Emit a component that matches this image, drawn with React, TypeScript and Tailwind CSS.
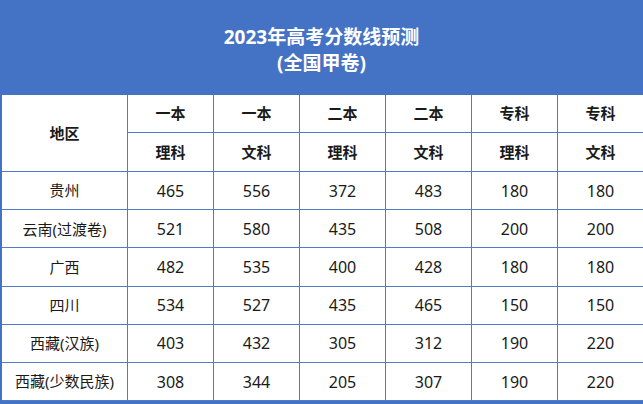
import React from "react";

const cols = [
  ["一本", "理科"],
  ["一本", "文科"],
  ["二本", "理科"],
  ["二本", "文科"],
  ["专科", "理科"],
  ["专科", "文科"],
];

const rows: [string, number[]][] = [
  ["贵州", [465, 556, 372, 483, 180, 180]],
  ["云南(过渡卷)", [521, 580, 435, 508, 200, 200]],
  ["广西", [482, 535, 400, 428, 180, 180]],
  ["四川", [534, 527, 435, 465, 150, 150]],
  ["西藏(汉族)", [403, 432, 305, 312, 190, 220]],
  ["西藏(少数民族)", [308, 344, 205, 307, 190, 220]],
];

const cell =
  "flex items-center justify-center border-r border-b border-[#4f7bcb]";

export default function App() {
  return (
    <div
      className="w-[643px] h-[404px] overflow-hidden bg-white text-[#1a1a1a]"
      style={{ fontFamily: '"Noto Sans", "Noto Sans CJK SC", sans-serif' }}
    >
      <div className="flex h-[95px] flex-col items-center justify-center bg-[#4472c4] pt-[5px] text-[19px] font-bold leading-[26px] text-white">
        <div>2023年高考分数线预测</div>
        <div>(全国甲卷)</div>
      </div>

      <div className="w-[646px] border-l-2 border-b-[4px] border-[#4472c4]">
        <div className="grid grid-cols-[126px_repeat(6,86px)] grid-rows-[38px_39px] text-[15px] font-bold">
          <div className={`${cell} row-span-2`}>地区</div>
          {cols.map(([a], i) => (
            <div key={"a" + i} className={cell}>
              {a}
            </div>
          ))}
          {cols.map(([, b], i) => (
            <div key={"b" + i} className={cell}>
              {b}
            </div>
          ))}
        </div>
        {rows.map(([name, vals]) => (
          <div
            key={name}
            className="grid h-[38.2px] grid-cols-[126px_repeat(6,86px)]"
          >
            <div className={`${cell} text-[15px]`}>{name}</div>
            {vals.map((v, i) => (
              <div key={i} className={`${cell} text-[16px]`}>
                {v}
              </div>
            ))}
          </div>
        ))}
      </div>
    </div>
  );
}
